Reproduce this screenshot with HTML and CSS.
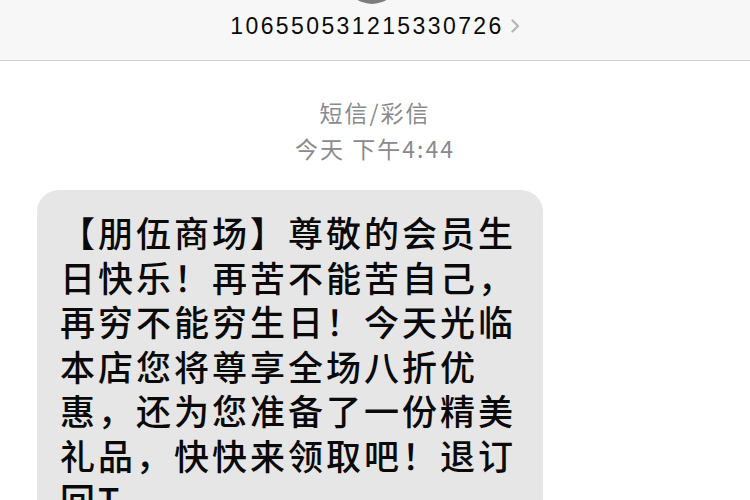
FILE: index.html
```html
<!DOCTYPE html>
<html lang="zh-CN">
<head>
    <meta charset="UTF-8">
    <meta name="viewport" content="width=device-width, initial-scale=1.0">
    <title>短信</title>
    <link rel="stylesheet" href="styles.css">
</head>
<body>
    <div class="header">
        <div class="avatar"></div>
        <div class="contact">
            <span class="number">106550531215330726</span>
            <svg class="chevron" width="9" height="14" viewBox="0 0 9 14">
                <polyline points="1.5,1.5 7,7 1.5,12.5" fill="none" stroke="#b5b5b5" stroke-width="2.2" stroke-linecap="round" stroke-linejoin="round"/>
            </svg>
        </div>
    </div>
    <div class="thread">
        <div class="meta">
            <div>短信/彩信</div>
            <div>今天 下午4:44</div>
        </div>
        <div class="bubble">【朋伍商场】尊敬的会员生日快乐！再苦不能苦自己，再穷不能穷生日！今天光临本店您将尊享全场八折优惠，还为您准备了一份精美礼品，快快来领取吧！退订回T</div>
    </div>
</body>
</html>
```

FILE: styles.css
```css
body {
    margin: 0;
    background: #fff;
    font-family: "Noto Sans CJK SC", "Liberation Sans", sans-serif;
    overflow: hidden;
}
.header {
    background: #f7f7f7;
    height: 60px;
    border-bottom: 1px solid #cfcfcf;
    display: flex;
    flex-direction: column;
    align-items: center;
}
.avatar {
    width: 56px;
    height: 56px;
    border-radius: 50%;
    background: #7d7d7d;
    margin-top: -52px;
    margin-right: 6px;
}
.contact {
    display: flex;
    align-items: center;
    gap: 7px;
    margin-top: 8px;
}
.number {
    font-family: "Liberation Sans", sans-serif;
    font-size: 23px;
    line-height: 28px;
    letter-spacing: 2.4px;
    color: #0a0a0a;
}
.chevron {
    display: block;
}
.thread {
    padding: 33px 0 0 37px;
}
.meta {
    margin-right: 37px;
    text-align: center;
    color: #8a8a8e;
    font-size: 23px;
    line-height: 36px;
    letter-spacing: 2px;
}
.bubble {
    margin-top: 24px;
    width: 460px;
    padding: 20px 23px 20px 23px;
    background: #e6e6e6;
    border-radius: 22px;
    color: #0a0a0a;
    font-size: 35px;
    font-weight: 500;
    line-height: 44.5px;
    letter-spacing: 3px;
}
```
